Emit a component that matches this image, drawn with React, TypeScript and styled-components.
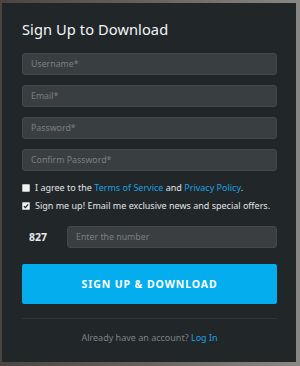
import * as React from "react";
import { styled, createGlobalStyle } from "styled-components";

const GlobalStyle = createGlobalStyle`
	html, body {
		margin: 0;
		padding: 0;
	}
	body {
		width: 300px;
		height: 366px;
		overflow: hidden;
		background: linear-gradient(90deg, #4b4541 0%, #6a625c 50%, #8a8884 100%);
		font-family: "Noto Sans", "DejaVu Sans", sans-serif;
	}
`;

const Backdrop = styled.div`
	padding: 3px 4px 4px 2px;
	box-sizing: border-box;
	height: 366px;
`;

const Modal = styled.div`
	box-sizing: border-box;
	height: 359px;
	background-color: #212629;
	padding: 16px 19px 0 20px;
	display: flex;
	flex-direction: column;
`;

const Title = styled.h2`
	margin: 0 0 14px;
	color: #f4f6f7;
	font-size: 14.6px;
	font-weight: 400;
	line-height: 20px;
	letter-spacing: 0.1px;
`;

const Fields = styled.div`
	display: flex;
	flex-direction: column;
	gap: 10px;
`;

const Input = styled.input`
	box-sizing: border-box;
	width: 100%;
	height: 22px;
	padding: 0 8px;
	background-color: #3a3e40;
	border: 1px solid #44484a;
	border-radius: 3px;
	color: #ddd;
	font-family: inherit;
	font-size: 8.8px;
	outline: none;

	&::placeholder {
		color: #7b7f81;
	}
`;

const Checks = styled.div`
	margin-top: 10px;
	display: flex;
	flex-direction: column;
	gap: 5px;
`;

const CheckRow = styled.label`
	display: flex;
	align-items: center;
	gap: 5px;
	height: 13px;
	color: #e2e4e5;
	font-size: 9px;
	white-space: nowrap;
`;

const Box = styled.span<{ $checked?: boolean }>`
	box-sizing: border-box;
	width: 8px;
	height: 8px;
	border-radius: 1px;
	background-color: #f2f2f2;
	border: 1px solid #bbb;
	display: flex;
	align-items: center;
	justify-content: center;
	flex-shrink: 0;
`;

const Link = styled.a`
	color: #1ba3e0;
	text-decoration: none;
`;

const CaptchaRow = styled.div`
	margin-top: 14px;
	display: flex;
	align-items: center;
`;

const Code = styled.span`
	flex: 0 0 45px;
	padding-left: 7px;
	box-sizing: border-box;
	color: #e8eaeb;
	font-size: 10.5px;
	font-weight: 700;
`;

const SubmitButton = styled.button`
	margin-top: 16px;
	height: 40px;
	width: 100%;
	border: none;
	border-radius: 2px;
	background-color: #03adee;
	color: #fff;
	font-family: inherit;
	font-size: 10.5px;
	font-weight: 700;
	letter-spacing: 0.9px;
	cursor: pointer;
`;

const Divider = styled.hr`
	margin: 14px 0 0;
	border: none;
	border-top: 1px solid #30353a;
`;

const Footer = styled.p`
	margin: 12px 0 0;
	text-align: center;
	color: #7d8285;
	font-size: 9px;
`;

const Check = () => (
	<svg width="6" height="6" viewBox="0 0 10 10">
		<path d="M1.5 5.2 L4 7.8 L8.6 2.2" stroke="#222" strokeWidth="2" fill="none" />
	</svg>
);

const App = () => {
	return (
		<>
			<GlobalStyle />
			<Backdrop>
				<Modal>
					<Title>Sign Up to Download</Title>
					<Fields>
						<Input placeholder="Username*" />
						<Input placeholder="Email*" />
						<Input type="password" placeholder="Password*" />
						<Input type="password" placeholder="Confirm Password*" />
					</Fields>
					<Checks>
						<CheckRow>
							<Box />
							<span>
								I agree to the <Link>Terms of Service</Link> and <Link>Privacy Policy</Link>.
							</span>
						</CheckRow>
						<CheckRow>
							<Box $checked>
								<Check />
							</Box>
							<span>Sign me up! Email me exclusive news and special offers.</span>
						</CheckRow>
					</Checks>
					<CaptchaRow>
						<Code>827</Code>
						<Input placeholder="Enter the number" />
					</CaptchaRow>
					<SubmitButton>SIGN UP &amp; DOWNLOAD</SubmitButton>
					<Divider />
					<Footer>
						Already have an account? <Link>Log In</Link>
					</Footer>
				</Modal>
			</Backdrop>
		</>
	);
};

export default App;
